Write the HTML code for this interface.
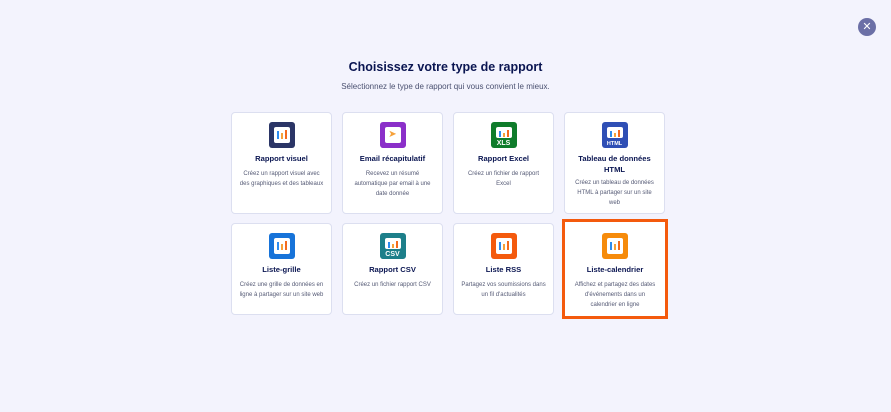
<!DOCTYPE html><html><head><style>
body{margin:0;width:891px;height:412px;background:#f3f3fd;font-family:"Liberation Sans",sans-serif;position:relative;overflow:hidden}
.close{position:absolute;left:858px;top:18px;width:18px;height:18px;border-radius:50%;background:#6b6fa6;color:#fff;font-size:11px;line-height:18px;text-align:center}
h1{position:absolute;top:60px;left:0;width:891px;text-align:center;margin:0;font-size:12.5px;color:#0a1551;font-weight:bold}
.sub{position:absolute;top:82px;left:0;width:891px;text-align:center;font-size:8px;color:#4a5070}
.card{position:absolute;width:101px;background:#fff;border:1px solid #dcdff0;border-radius:4px;box-sizing:border-box;text-align:center}
.ic{width:26px;height:26px;border-radius:3px;margin:9px auto 0;position:relative}
.ic .in{position:absolute;left:5px;top:5px;width:16px;height:16px;background:#fff;border-radius:2px}
.ic .b{position:absolute;bottom:4px;width:2px;background:#2d8cf0}
.t{font-size:7.6px;font-weight:bold;color:#0a1551;margin-top:5px;line-height:11px;padding:0 4px}
.d{font-size:6px;color:#555a75;margin-top:5px;line-height:10px;padding:0 8px}
.lab{position:absolute;bottom:1px;left:0;width:26px;color:#fff;font-size:7px;font-weight:bold;text-align:center}
.sel{border:3px solid #f45a0d;border-radius:0}
</style></head><body>
<div class="close">✕</div>
<h1>Choisissez votre type de rapport</h1>
<div class="sub">Sélectionnez le type de rapport qui vous convient le mieux.</div>

<div class="card" style="left:231px;top:112px;height:102px"><div class="ic" style="background:#2b3566"><div class="in"><div class="b" style="left:3px;height:8px"></div><div class="b" style="left:7px;height:6px;background:#f6a13a"></div><div class="b" style="left:11px;height:9px;background:#f46b1e"></div></div></div><div class="t">Rapport visuel</div><div class="d" style="padding:0 7px">Créez un rapport visuel avec des graphiques et des tableaux</div></div>

<div class="card" style="left:342px;top:112px;height:102px"><div class="ic" style="background:#8b2fc9"><div class="in" style="color:#f6a13a;font-size:10px;line-height:16px">➤</div></div><div class="t">Email récapitulatif</div><div class="d">Recevez un résumé automatique par email à une date donnée</div></div>

<div class="card" style="left:453px;top:112px;height:102px"><div class="ic" style="background:#0f7c2b"><div class="in" style="height:11px"><div class="b" style="left:3px;height:6px;bottom:1px"></div><div class="b" style="left:7px;height:4px;bottom:1px;background:#f6a13a"></div><div class="b" style="left:11px;height:7px;bottom:1px;background:#f46b1e"></div></div><div class="lab">XLS</div></div><div class="t">Rapport Excel</div><div class="d" style="padding:0 10px">Créez un fichier de rapport Excel</div></div>

<div class="card" style="left:564px;top:112px;height:102px"><div class="ic" style="background:#2f4fb5"><div class="in" style="height:11px"><div class="b" style="left:3px;height:6px;bottom:1px"></div><div class="b" style="left:7px;height:4px;bottom:1px;background:#f6a13a"></div><div class="b" style="left:11px;height:7px;bottom:1px;background:#f46b1e"></div></div><div class="lab" style="font-size:5.5px">HTML</div></div><div class="t">Tableau de données HTML</div><div class="d" style="margin-top:3px">Créez un tableau de données HTML à partager sur un site web</div></div>

<div class="card" style="left:231px;top:223px;height:92px"><div class="ic" style="background:#1773d9"><div class="in"><div class="b" style="left:3px;height:8px"></div><div class="b" style="left:7px;height:6px;background:#f6a13a"></div><div class="b" style="left:11px;height:9px;background:#f46b1e"></div></div></div><div class="t">Liste-grille</div><div class="d" style="padding:0 5px">Créez une grille de données en ligne à partager sur un site web</div></div>

<div class="card" style="left:342px;top:223px;height:92px"><div class="ic" style="background:#1d7f8a"><div class="in" style="height:11px"><div class="b" style="left:3px;height:6px;bottom:1px"></div><div class="b" style="left:7px;height:4px;bottom:1px;background:#f6a13a"></div><div class="b" style="left:11px;height:7px;bottom:1px;background:#f46b1e"></div></div><div class="lab">CSV</div></div><div class="t">Rapport CSV</div><div class="d" style="padding:0 4px">Créez un fichier rapport CSV</div></div>

<div class="card" style="left:453px;top:223px;height:92px"><div class="ic" style="background:#f45a0d"><div class="in"><div class="b" style="left:3px;height:8px"></div><div class="b" style="left:7px;height:6px;background:#f6a13a"></div><div class="b" style="left:11px;height:9px;background:#f46b1e"></div></div></div><div class="t">Liste RSS</div><div class="d" style="padding:0 5px">Partagez vos soumissions dans un fil d'actualités</div></div>

<div class="card sel" style="left:562px;top:219px;height:100px;width:106px"><div class="ic" style="background:#f68b0b;margin-top:11px"><div class="in"><div class="b" style="left:3px;height:8px"></div><div class="b" style="left:7px;height:6px;background:#f6a13a"></div><div class="b" style="left:11px;height:9px;background:#f46b1e"></div></div></div><div class="t">Liste-calendrier</div><div class="d">Affichez et partagez des dates d'événements dans un calendrier en ligne</div></div>
</body></html>
